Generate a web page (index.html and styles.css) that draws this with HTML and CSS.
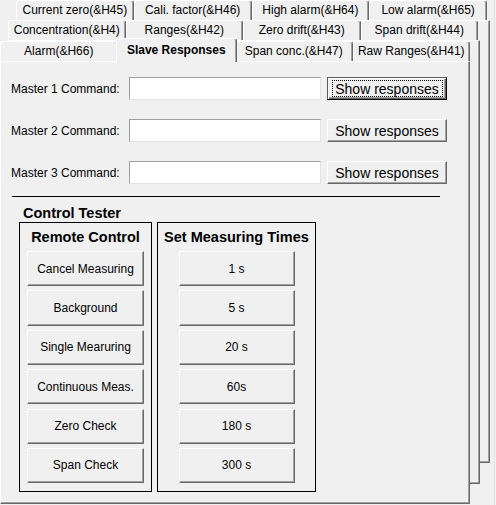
FILE: index.html
```html
<!DOCTYPE html>
<html>
<head>
<meta charset="utf-8">
<link rel="stylesheet" href="styles.css">
</head>
<body>
<div class="tabctl">
  <div class="layer layer-3">
    <div class="tabrow">
      <div class="tab">Current zero(&amp;H45)</div>
      <div class="tab">Cali. factor(&amp;H46)</div>
      <div class="tab">High alarm(&amp;H64)</div>
      <div class="tab">Low alarm(&amp;H65)</div>
    </div>
    <div class="page"></div>
  </div>
  <div class="layer layer-2">
    <div class="tabrow">
      <div class="tab">Concentration(&amp;H4)</div>
      <div class="tab">Ranges(&amp;H42)</div>
      <div class="tab">Zero drift(&amp;H43)</div>
      <div class="tab">Span drift(&amp;H44)</div>
    </div>
    <div class="page"></div>
  </div>
  <div class="layer layer-1">
    <div class="tabrow">
      <div class="tab">Alarm(&amp;H66)</div>
      <div class="tab tab-selected">Slave Responses</div>
      <div class="tab">Span conc.(&amp;H47)</div>
      <div class="tab">Raw Ranges(&amp;H41)</div>
    </div>
    <div class="page page-front">
      <div class="cmdrow">
        <label class="cmd-label">Master 1 Command:</label>
        <input class="cmd-input" type="text">
        <button class="btn cmd-btn btn-focus"><span>Show responses</span></button>
      </div>
      <div class="cmdrow">
        <label class="cmd-label">Master 2 Command:</label>
        <input class="cmd-input" type="text">
        <button class="btn cmd-btn"><span>Show responses</span></button>
      </div>
      <div class="cmdrow">
        <label class="cmd-label">Master 3 Command:</label>
        <input class="cmd-input" type="text">
        <button class="btn cmd-btn"><span>Show responses</span></button>
      </div>
      <div class="separator"></div>
      <div class="section-title">Control Tester</div>
      <div class="frames">
        <div class="frame frame-remote">
          <div class="frame-title">Remote Control</div>
          <div class="frame-buttons">
            <button class="btn ctl-btn btn-remote">Cancel Measuring</button>
            <button class="btn ctl-btn btn-remote">Background</button>
            <button class="btn ctl-btn btn-remote">Single Mearuring</button>
            <button class="btn ctl-btn btn-remote">Continuous Meas.</button>
            <button class="btn ctl-btn btn-remote">Zero Check</button>
            <button class="btn ctl-btn btn-remote">Span Check</button>
          </div>
        </div>
        <div class="frame frame-times">
          <div class="frame-title">Set Measuring Times</div>
          <div class="frame-buttons">
            <button class="btn ctl-btn btn-time">1 s</button>
            <button class="btn ctl-btn btn-time">5 s</button>
            <button class="btn ctl-btn btn-time">20 s</button>
            <button class="btn ctl-btn btn-time">60s</button>
            <button class="btn ctl-btn btn-time">180 s</button>
            <button class="btn ctl-btn btn-time">300 s</button>
          </div>
        </div>
      </div>
    </div>
  </div>
</div>
</body>
</html>
```
FILE: styles.css
```css
* { box-sizing: border-box; }
html, body { margin: 0; padding: 0; }
body {
  background: #f0f0f0;
  font-family: "Liberation Sans", Arial, sans-serif;
  font-size: 12px;
  color: #000;
  width: 496px;
  height: 505px;
  overflow: hidden;
}
.tabctl {
  display: grid;
  width: 495px;
  height: 505px;
  border-right: 1px solid #d9e4f1;
}
.layer {
  grid-area: 1 / 1;
  display: flex;
  flex-direction: column;
  align-items: flex-start;
}
.layer-3 { margin-left: 16px; }
.layer-2 { margin-left: 8px; margin-top: 20px; }
.layer-1 { margin-top: 40px; }

.tabrow {
  display: flex;
  align-items: flex-end;
  height: 20px;
}
.layer-3 .tabrow { width: 471px; }
.layer-2 .tabrow { width: 470px; }
.layer-1 .tabrow { width: 470px; height: 21px; }

.tab {
  flex: 1 1 0;
  height: 20px;
  background: #f0f0f0;
  border-top: 1px solid #fff;
  border-left: 1px solid #fff;
  border-right: 1px solid #696969;
  border-radius: 3px 3px 0 0;
  box-shadow: inset -1px 0 #a0a0a0;
  text-align: center;
  line-height: 18px;
  white-space: nowrap;
  overflow: hidden;
}
.layer-1 .tab { flex: 0 0 117.5px; }
.layer-1 .tab.tab-selected {
  flex: 0 0 121.5px;
  margin: 0 -2px -1px -2px;
  height: 24px;
  line-height: 22px;
  font-weight: bold;
  position: relative;
  z-index: 2;
}

.page {
  background: #f0f0f0;
  border-top: 1px solid #fff;
  border-left: 1px solid #fff;
  border-right: 1px solid #696969;
  border-bottom: 1px solid #696969;
  box-shadow: inset -1px -1px #a0a0a0;
}
.layer-3 .page { width: 474px; height: 443px; }
.layer-2 .page { width: 472px; height: 444px; }
.layer-1 .page { width: 470px; height: 443px; }

.page-front {
  padding-top: 15px;
  display: flex;
  flex-direction: column;
  align-items: flex-start;
}

.cmdrow {
  display: flex;
  align-items: center;
  height: 23px;
  padding-left: 10px;
  margin-bottom: 19px;
}
.cmdrow:nth-child(3) { margin-bottom: 0; }
.cmd-label {
  width: 118px;
  font-size: 12px;
  white-space: nowrap;
}
.cmd-input {
  width: 192px;
  height: 23px;
  margin: 0;
  padding: 0 3px;
  background: #fff;
  border: 1px solid;
  border-color: #a0a0a0 #e3e3e3 #e3e3e3 #a0a0a0;
  outline: none;
  font-family: inherit;
  font-size: 12px;
}

.btn {
  margin: 0;
  padding: 0;
  background: #f0f0f0;
  border: 1px solid;
  border-color: #fff #696969 #696969 #fff;
  box-shadow: inset -1px -1px #a0a0a0;
  font-family: "Liberation Sans", Arial, sans-serif;
  color: #000;
  text-align: center;
  white-space: nowrap;
  cursor: default;
}
.cmd-btn {
  width: 120px;
  height: 23px;
  margin-left: 6px;
  font-size: 14px;
  line-height: 16px;
  position: relative;
}
.btn-focus {
  border-color: #5a5a5a #000 #000 #5a5a5a;
  box-shadow: inset 1px 1px #fff, inset -1px -1px #696969, inset -2px -2px #a0a0a0;
}
.btn-focus::after {
  content: "";
  position: absolute;
  left: 4px;
  right: 3px;
  top: 2px;
  bottom: 2px;
  border: 1px dotted #000;
}

.separator {
  margin-top: 12px;
  margin-left: 11px;
  width: 428px;
  height: 1px;
  background: #000;
}
.section-title {
  margin-top: 8px;
  margin-left: 22px;
  font-size: 14.5px;
  font-weight: bold;
  line-height: 16px;
}
.frames {
  display: flex;
  gap: 5px;
  margin-top: 1px;
  margin-left: 18px;
}
.frame {
  height: 270px;
  border: 1px solid #000;
  padding-top: 6px;
  display: flex;
  flex-direction: column;
  align-items: center;
}
.frame-remote { width: 133px; }
.frame-times { width: 159px; }
.frame-title {
  font-size: 14.5px;
  font-weight: bold;
  line-height: 16px;
  white-space: nowrap;
}
.frame-buttons {
  margin-top: 6px;
  display: flex;
  flex-direction: column;
  gap: 4.2px;
}
.ctl-btn {
  height: 35.2px;
  font-size: 12px;
}
.btn-remote { width: 117px; }
.btn-time { width: 116px; }
```
